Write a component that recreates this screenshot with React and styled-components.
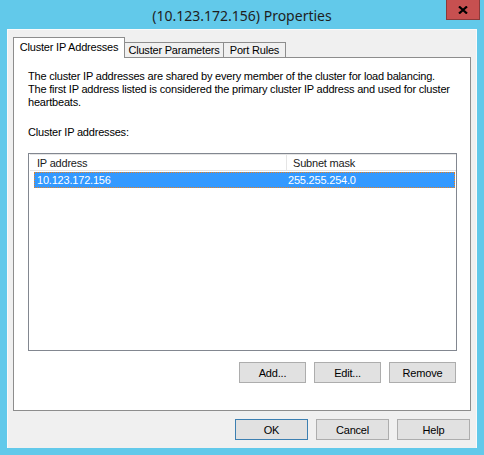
import React from 'react';
import styled, { createGlobalStyle } from 'styled-components';

const Global = createGlobalStyle`
  html, body { margin: 0; padding: 0; background: #62c9ea; }
  body { width: 484px; height: 455px; overflow: hidden; }
`;

const Window = styled.div`
  width: 484px;
  height: 455px;
  box-sizing: border-box;
  background: #62c9ea;
  display: flex;
  flex-direction: column;
  padding: 0 7px 7px 7px;
  font-family: "Liberation Sans", Arial, sans-serif;
  font-size: 11px;
  letter-spacing: -0.2px;
  color: #000;
`;

const TitleBar = styled.div`
  height: 29px;
  display: grid;
  grid-template-columns: 1fr auto 1fr;
  align-items: center;
`;

const Title = styled.div`
  grid-column: 2;
  font-family: "Noto Sans", "Open Sans", sans-serif;
  font-size: 14px;
  letter-spacing: 0;
  color: #1e1e1e;
  margin-top: 1px;
`;

const CloseButton = styled.div`
  grid-column: 3;
  justify-self: end;
  align-self: start;
  margin-right: -3px;
  width: 34px;
  height: 20px;
  box-sizing: border-box;
  background: #c75050;
  border: 1px solid #8a3a3a;
  border-top: none;
  display: flex;
  align-items: center;
  justify-content: center;
`;

const Client = styled.div`
  flex: 1;
  background: #f0f0f0;
  box-shadow: inset 1px 1px 0 #fafafa, inset -1px 0 0 #fafafa;
  display: flex;
  flex-direction: column;
  padding: 8px 6px 8px 6px;
`;

const TabStrip = styled.div`
  height: 20px;
  display: flex;
  align-items: flex-end;
`;

const Tab = styled.div`
  box-sizing: border-box;
  border: 1px solid #8d8d8d;
  border-bottom: none;
  display: flex;
  align-items: center;
  justify-content: center;
  white-space: nowrap;
  margin-left: ${p => (p.$first ? 0 : -1)}px;
  width: ${p => p.$w}px;
  height: ${p => (p.$active ? 21 : 15)}px;
  margin-bottom: ${p => (p.$active ? -1 : 0)}px;
  background: ${p => (p.$active ? '#ffffff' : '#f0f0f0')};
  padding-bottom: ${p => (p.$active ? 2 : 0)}px;
  position: relative;
  z-index: ${p => (p.$active ? 2 : 1)};
`;

const Panel = styled.div`
  height: 354px;
  box-sizing: border-box;
  background: #ffffff;
  border: 1px solid #8d8d8d;
  padding: 12px 13px 0 14px;
  display: flex;
  flex-direction: column;
`;

const Para = styled.div`
  line-height: 13px;
  white-space: nowrap;
`;

const Label = styled.div`
  line-height: 13px;
  margin-top: 17px;
`;

const ListView = styled.div`
  margin-top: 14px;
  height: 198px;
  box-sizing: border-box;
  border: 1px solid #828790;
  background: #fff;
  display: flex;
  flex-direction: column;
`;

const HeaderRow = styled.div`
  display: grid;
  grid-template-columns: 256px 1fr;
  height: 17px;
  box-sizing: border-box;
  border-top: 1px solid #e5e5e5;
  border-bottom: 1px solid #e5e5e5;
  margin-left: 1px;
`;

const HeaderCell = styled.div`
  display: flex;
  align-items: center;
  padding-left: ${p => p.$pad}px;
  border-left: 1px solid ${p => (p.$first ? 'transparent' : '#e5e5e5')};
  color: #1a1a1a;
  white-space: nowrap;
`;

const Row = styled.div`
  display: grid;
  grid-template-columns: 250px 1fr;
  height: 16px;
  margin: 1px 1px 0 5px;
  box-sizing: border-box;
  background: #3399ff;
  border: 1px dotted #e87f1e;
  color: #ffffff;
  align-items: center;
`;

const Cell = styled.div`
  padding-left: ${p => p.$pad}px;
  white-space: nowrap;
`;

const ButtonRow = styled.div`
  display: flex;
  justify-content: flex-end;
  gap: 8px;
  margin-top: ${p => p.$mt || 0}px;
  padding-right: ${p => p.$pr || 0}px;
`;

const Button = styled.div`
  width: ${p => p.$w}px;
  height: 21px;
  box-sizing: border-box;
  background: #e1e1e1;
  border: 1px solid ${p => (p.$default ? '#3c7fb1' : '#adadad')};
  display: flex;
  align-items: center;
  justify-content: center;
  color: #000;
`;

export default function App() {
  return (
    <>
      <Global />
      <Window>
        <TitleBar>
          <Title>(10.123.172.156) Properties</Title>
          <CloseButton>
            <svg width="10" height="8" viewBox="0 0 10 8">
              <path d="M1 0.5 L9 7.5 M9 0.5 L1 7.5" stroke="#000" strokeWidth="2.2" />
            </svg>
          </CloseButton>
        </TitleBar>
        <Client>
          <TabStrip>
            <Tab $first $active $w={112}>Cluster IP Addresses</Tab>
            <Tab $w={100}>Cluster Parameters</Tab>
            <Tab $w={63}>Port Rules</Tab>
          </TabStrip>
          <Panel>
            <Para>
              The cluster IP addresses are shared by every member of the cluster for load balancing.
              <br />
              The first IP address listed is considered the primary cluster IP address and used for cluster
              <br />
              heartbeats.
            </Para>
            <Label>Cluster IP addresses:</Label>
            <ListView>
              <HeaderRow>
                <HeaderCell $first $pad={6}>IP address</HeaderCell>
                <HeaderCell $pad={6}>Subnet mask</HeaderCell>
              </HeaderRow>
              <Row>
                <Cell $pad={2}>10.123.172.156</Cell>
                <Cell $pad={3}>255.255.254.0</Cell>
              </Row>
            </ListView>
            <ButtonRow $mt={11} $pr={1}>
              <Button $w={67}>Add...</Button>
              <Button $w={67}>Edit...</Button>
              <Button $w={67}>Remove</Button>
            </ButtonRow>
          </Panel>
          <ButtonRow $mt={8} $pr={1}>
            <Button $w={73} $default>OK</Button>
            <Button $w={73}>Cancel</Button>
            <Button $w={73}>Help</Button>
          </ButtonRow>
        </Client>
      </Window>
    </>
  );
}
